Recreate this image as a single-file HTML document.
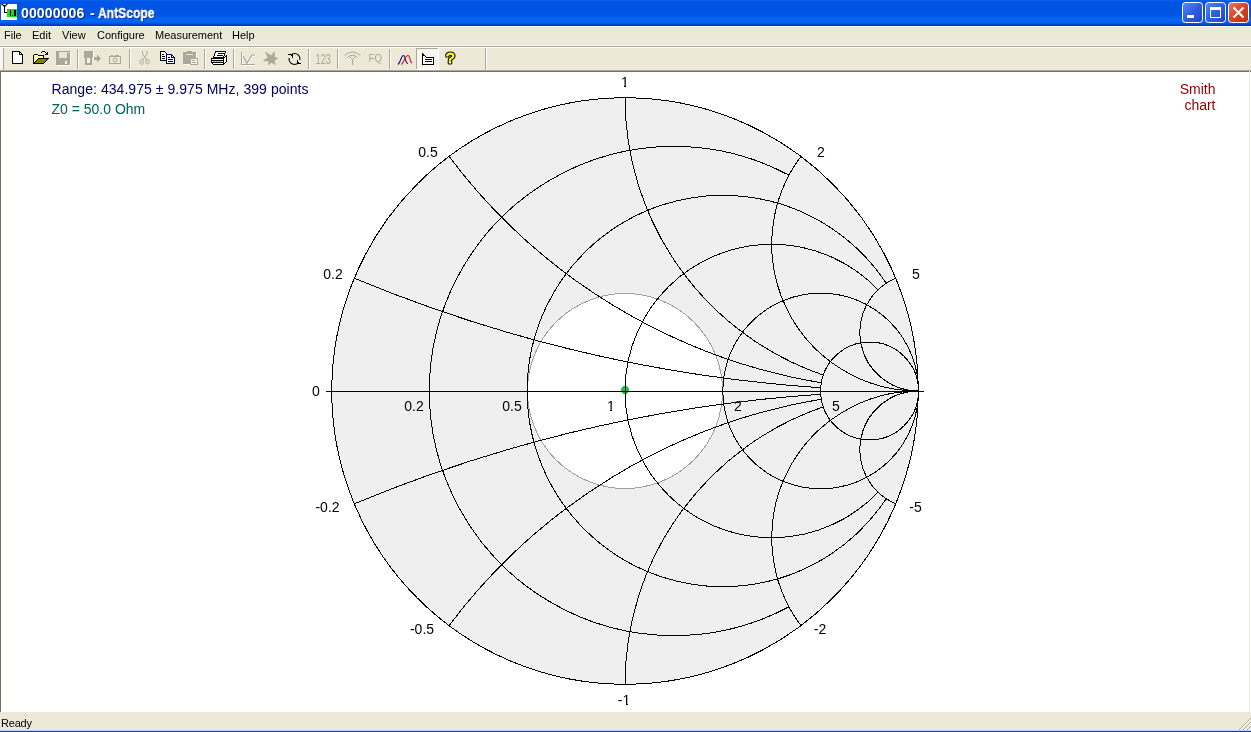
<!DOCTYPE html>
<html><head><meta charset="utf-8"><title>00000006 - AntScope</title>
<style>
html,body{margin:0;padding:0;}
body{width:1251px;height:732px;overflow:hidden;background:#ece9d8;position:relative;font-family:"Liberation Sans",sans-serif;}
#title{position:absolute;left:0;top:0;width:1251px;height:26px;background:linear-gradient(to bottom,#0a62ec 0px,#0055e5 2px,#0054e3 13px,#0058e8 16px,#0066f8 19px,#0064f4 22px,#0050d8 24px,#003cb4 25px,#0038a8 26px);}
#title span{position:absolute;top:5px;font:bold 14px "Liberation Sans",sans-serif;color:#fff;text-shadow:1px 1px 0 #0a2a80;white-space:nowrap;will-change:transform;transform-origin:0 50%}
#menuline{position:absolute;left:0;top:26px;width:1251px;height:1px;background:#fff;}
#menu{will-change:transform;position:absolute;left:0;top:27px;width:1251px;height:18px;font:11px "Liberation Sans",sans-serif;color:#000;}
#menu span{position:absolute;top:2px;white-space:nowrap}
#sep0{position:absolute;left:0;top:45px;width:1251px;height:1px;background:#f7f6f0;}
#sep1{position:absolute;left:0;top:46px;width:1251px;height:1px;background:#aca899;}
#sep2{position:absolute;left:0;top:47px;width:1251px;height:1px;background:#fff;}
#content{position:absolute;left:0;top:70px;width:1251px;height:642px;background:#fff;}
#ctop1{position:absolute;left:0;top:70px;width:1251px;height:1px;background:#aca899;}
#ctop2{position:absolute;left:0;top:71px;width:1251px;height:1px;background:#716f64;}
#cleft{position:absolute;left:0;top:71px;width:1px;height:641px;background:#716f64;}
#status{position:absolute;left:0;top:712px;width:1251px;height:18px;background:#ece9d8;font:11px "Liberation Sans",sans-serif;}
#status span{position:absolute;left:1px;top:5px;will-change:transform;letter-spacing:-0.2px}
#bot{position:absolute;left:0;top:730px;width:1251px;height:1px;background:#b8d4f8;}
#bot2{position:absolute;left:0;top:731px;width:1251px;height:1px;background:#1c3ea0;}
#cright{position:absolute;left:1249px;top:71px;width:1px;height:641px;background:#ece9d8;}
svg{position:absolute;left:0;top:0;will-change:transform}
</style></head><body>
<div id="title"><span id="t1" style="left:20.5px;letter-spacing:0.15px">00000006</span><span id="t2" style="left:89.5px">-</span><span id="t3" style="left:98px;transform:scaleX(0.865);-webkit-text-stroke:0.3px #fff">AntScope</span></div>
<div id="menuline"></div>
<div id="menu"><span style="left:4px">File</span><span style="left:32px">Edit</span><span style="left:62px">View</span><span style="left:97px">Configure</span><span style="left:155px">Measurement</span><span style="left:232px">Help</span></div>
<div id="sep0"></div><div id="sep1"></div><div id="sep2"></div>
<div id="content"></div><div id="ctop1"></div><div id="ctop2"></div><div id="cleft"></div>
<div id="status"><span>Ready</span></div>
<div id="bot"></div><div id="bot2"></div><div id="cright"></div>
<svg id="tb" width="1251" height="732" viewBox="0 0 1251 732">
<g shape-rendering="crispEdges">
<!-- gripper -->
<rect x="0" y="48" width="3" height="22" fill="#f7f6f0"/>
<rect x="3" y="48" width="1" height="22" fill="#aca899"/>
<!-- separators -->
<g fill="#aca899"><rect x="77" y="49" width="1" height="20"/><rect x="129" y="49" width="1" height="20"/><rect x="204" y="49" width="1" height="20"/><rect x="233" y="49" width="1" height="20"/><rect x="308" y="49" width="1" height="20"/><rect x="337" y="49" width="1" height="20"/><rect x="389" y="49" width="1" height="20"/><rect x="485" y="48" width="1" height="22"/></g>
<g fill="#fff"><rect x="78" y="49" width="1" height="20"/><rect x="130" y="49" width="1" height="20"/><rect x="205" y="49" width="1" height="20"/><rect x="234" y="49" width="1" height="20"/><rect x="309" y="49" width="1" height="20"/><rect x="338" y="49" width="1" height="20"/><rect x="390" y="49" width="1" height="20"/><rect x="486" y="48" width="1" height="22"/></g>
<!-- new -->
<path d="M12.5 51.5H19.5L22.5 54.5V63.5H12.5Z" fill="#fff" stroke="#000"/>
<path d="M19.5 51.5V54.5H22.5" fill="none" stroke="#000"/>
<!-- open -->
<path d="M33.5 63.5V55.5L34.5 54.5H37.5L38.5 55.5H43.5V58.5H38.5L33.5 63.5Z" fill="#ffff99" stroke="#000"/>
<path d="M33.5 63.5L38.5 58.5H48.5L43.5 63.5Z" fill="#808000" stroke="#000"/>
<path d="M42 51h3v1h-3zM41 52h1v1h-1zM45 52h1v1h-1zM47 52h1v1h-1zM46 53h2v1h-2zM45 54h3v1h-3z" fill="#000"/>
<!-- save (disabled) -->
<rect x="57" y="52" width="14" height="14" fill="#fff"/>
<rect x="56" y="51" width="14" height="14" fill="#aca899"/>
<rect x="59" y="52" width="8" height="6" fill="#e8e5d6"/>
<rect x="68" y="52" width="1" height="1" fill="#fff"/>
<rect x="65" y="61" width="2" height="3" fill="#f4f2ea"/>
<!-- device arrow (disabled) -->
<rect x="85" y="52" width="9" height="7" fill="#fff"/>
<rect x="84" y="51" width="9" height="7" fill="#aca899"/>
<rect x="85" y="58" width="7" height="7" fill="#aca899"/>
<rect x="87" y="58" width="3" height="5" fill="#f4f2ea"/>
<path d="M94 57H97V54.5L100.5 58.5L97 62V60H94Z" fill="#aca899"/>
<!-- camera (disabled) -->
<g fill="none" stroke="#aca899"><rect x="109.5" y="56.5" width="11" height="7"/><path d="M111 55.5H113M115 55.5H119"/><circle cx="115" cy="60" r="2" shape-rendering="auto"/></g>
<!-- scissors (disabled) -->
<g fill="none" stroke="#aca899" shape-rendering="auto"><path d="M142.5 51V54L147 60M147 51V54L142.5 60"/><ellipse cx="141.7" cy="62" rx="1.6" ry="2.4"/><ellipse cx="147.5" cy="61.7" rx="1.6" ry="2.4"/></g>
<!-- copy -->
<path d="M160.500 51.500H164.500L166.500 53.500V60.500H160.500Z" fill="#fff" stroke="#000"/>
<path d="M162 54H164M162 56H165M162 58H165" stroke="#000" fill="none" transform="translate(0,0.5)"/>
<path d="M166.500 54.500H171.500L174.500 57.500V63.500H166.500Z" fill="#fff" stroke="#000080"/>
<path d="M171.500 54.500V57.500H174.500" fill="none" stroke="#000080"/>
<path d="M168 57.500H170M168 59.500H173M168 61.500H173" stroke="#000" fill="none"/>
<!-- paste (disabled) -->
<rect x="184" y="53" width="13" height="12" fill="#fff"/>
<rect x="183" y="52" width="13" height="12" fill="#aca899"/>
<rect x="187" y="51" width="5" height="2" fill="#aca899"/>
<rect x="186" y="54" width="7" height="1" fill="#e8e5d6"/>
<rect x="190" y="58" width="8" height="7" fill="#aca899"/>
<rect x="191" y="59" width="6" height="5" fill="#f4f2ea"/>
<rect x="192" y="60" width="3" height="1" fill="#aca899"/><rect x="192" y="62" width="4" height="1" fill="#aca899"/>
<!-- print -->
<path d="M215.500 51.500H225.500L223.500 57.500H213.500Z" fill="#fff" stroke="#000"/>
<path d="M218 53.500H224M217 55.500H223" stroke="#000" fill="none"/>
<path d="M211.500 58.500H223.500L226.500 55.500V61.500L223.500 64.500H213.500L211.500 62.500Z" fill="#fff" stroke="#000"/>
<path d="M211.500 58.500H223.500L226.500 55.500M223.500 58.500V64.500M212 60.500H223M212 62.500H223" fill="none" stroke="#000"/>
<rect x="213" y="61" width="9" height="1" fill="#c8c850"/>
<!-- graph (disabled) -->
<path d="M242.500 53V65.500H256M244 57.500L248 64L253 56H256" fill="none" stroke="#fff" shape-rendering="auto"/>
<g fill="none" stroke="#aca899"><path d="M241.500 52V64.500H255"/><path d="M243 56L247 63L252 55H255" shape-rendering="auto" stroke-width="1.200"/></g>
<!-- star (disabled) -->
<path d="M265.400 52L271 55.700L274.400 51.800L274.800 57.600L277.900 58.200L274.200 60.700L275.400 64.500L271.200 62.600L268.300 64.900L268.800 61L263.300 60.700L268 57.600Z" fill="#aca899" stroke="#aca899" stroke-width="0.600" shape-rendering="auto"/>
<!-- refresh -->
<circle cx="294.500" cy="59" r="5.500" fill="none" stroke="#000" shape-rendering="auto" stroke-width="1.100"/>
<rect x="288" y="55" width="4" height="3" fill="#ece9d8"/><rect x="298" y="60" width="4" height="3" fill="#ece9d8"/>
<path d="M288 54h5v4h-1v-2h-1v-1h-3zM297 60h1v2h1v1h2v1h-4z" fill="#000"/>
<!-- antenna (disabled) -->
<g fill="none" stroke="#aca899" shape-rendering="auto"><path d="M344.500 55.500Q352.500 48.500 360.500 55.500"/><path d="M347.500 57.500Q352.500 53 357.500 57.500"/><path d="M352.500 65V59.500M349.500 56.500L352.500 59.500L355.500 56.500"/></g>
<!-- curves -->
<g fill="none" shape-rendering="auto"><path d="M398 64.500C401 62 401 55.500 403.500 55.500C405.500 55.500 405 63.500 408 63.500" stroke="#101088" stroke-width="1.1"/><path d="M401.500 64.500C404.500 62 405 55.500 408 55.500C410.500 55.500 409.500 62.500 412 63" stroke="#d81818" stroke-width="1.1"/></g>
<!-- pressed button -->
<rect x="416" y="48" width="23" height="22" fill="#f6f5ee"/>
<rect x="416" y="48" width="23" height="1" fill="#aca899"/><rect x="416" y="48" width="1" height="22" fill="#aca899"/>
<rect x="416" y="69" width="23" height="1" fill="#fff"/><rect x="438" y="48" width="1" height="22" fill="#fff"/>
<!-- tag icon -->
<path d="M422.500 54V64.500H433.500V57.500H426.500Z" fill="#fff" stroke="#000"/>
<path d="M425 59.500H432M425 61.500H432" stroke="#000" fill="none"/>
</g>
<!-- text icons -->
<text x="315.500" y="64" font-family="Liberation Sans, sans-serif" font-size="14" fill="#aca899" textLength="15.500" lengthAdjust="spacingAndGlyphs">123</text>
<text x="368.500" y="62" font-family="Liberation Sans, sans-serif" font-size="10" fill="#aca899" textLength="13.500" lengthAdjust="spacingAndGlyphs">FQ</text>
<g font-family="Liberation Sans, sans-serif" font-size="15" stroke-linejoin="round"><text x="446" y="63" fill="#000" stroke="#000" stroke-width="3.200" textLength="8.500" lengthAdjust="spacingAndGlyphs">?</text><text x="446" y="63" fill="#ffff00" stroke="#ffff00" stroke-width="1" textLength="8.500" lengthAdjust="spacingAndGlyphs">?</text></g>
</svg>

<svg id="chrome" width="1251" height="732" viewBox="0 0 1251 732">
<defs>
<linearGradient id="bb" x1="0" y1="0" x2="1" y2="1"><stop offset="0" stop-color="#5a8af4"/><stop offset="0.5" stop-color="#2f5fe0"/><stop offset="1" stop-color="#1e46c0"/></linearGradient>
<linearGradient id="br" x1="0" y1="0" x2="1" y2="1"><stop offset="0" stop-color="#ea7a5c"/><stop offset="0.5" stop-color="#d8451f"/><stop offset="1" stop-color="#b83010"/></linearGradient>
</defs>
<!-- app icon -->
<g shape-rendering="crispEdges">
<rect x="1" y="4" width="16" height="16" fill="#fff"/>
<rect x="7" y="9" width="10" height="8" fill="#18e018"/>
<rect x="10" y="10" width="1" height="6" fill="#000"/><rect x="12" y="15" width="1" height="1" fill="#000"/><rect x="14" y="10" width="2" height="6" fill="#000"/>
<rect x="4" y="5" width="1" height="8" fill="#000"/><rect x="4" y="12" width="3" height="1" fill="#000"/>
</g>
<path d="M1.500 3.800L4.500 6.500L7.500 3.800" fill="none" stroke="#000" stroke-width="1.100"/>
<!-- window buttons -->
<rect x="1182.500" y="2.500" width="20" height="20" rx="3" fill="url(#bb)" stroke="#fff"/>
<rect x="1205.500" y="2.500" width="20" height="20" rx="3" fill="url(#bb)" stroke="#fff"/>
<rect x="1228.500" y="2.500" width="20" height="20" rx="3" fill="url(#br)" stroke="#fff"/>
<rect x="1187" y="15" width="7" height="3" fill="#fff"/>
<path d="M1210.500 8.500H1220.500V17.500H1210.500Z" fill="none" stroke="#fff" shape-rendering="crispEdges"/>
<rect x="1210" y="7" width="11" height="3" fill="#fff"/>
<path d="M1233.500 7.500L1243.500 17.500M1243.500 7.500L1233.500 17.500" stroke="#fff" stroke-width="2.200" fill="none"/>
<!-- size grip -->
<g stroke="#aca899" stroke-width="1" fill="none"><path d="M1239 730L1251 718M1243 730L1251 722M1247 730L1251 726"/></g>
<g stroke="#fff" stroke-width="1" fill="none"><path d="M1240 730L1251 719M1244 730L1251 723M1248 730L1251 727"/></g>
</svg>

<svg id="chart" width="1251" height="732" viewBox="0 0 1251 732">
<g shape-rendering="crispEdges" fill="none" stroke="#000" stroke-width="1">
<circle cx="625" cy="391" r="293.25" fill="#efefef"/>
<circle cx="625" cy="391" r="97.5" fill="#fff" stroke="#a0a0a0"/>
<circle cx="625" cy="390" r="4" fill="#22c040" stroke="none"/>
<path d="M789.01 175.19A244.58 244.58 0 1 0 789.01 606.81"/>
<path d="M886.19 283.29A195.67 195.67 0 1 0 886.19 498.71"/>
<path d="M878.02 289.79A146.75 146.75 0 1 0 878.02 492.21"/>
<circle cx="820.67" cy="391" r="97.83"/>
<circle cx="869.58" cy="391" r="48.92"/>
<path d="M354.08 278.12A1467.5 1467.5 0 0 0 820.78 387.74"/>
<path d="M354.08 503.88A1467.5 1467.5 0 0 1 820.78 394.26"/>
<path d="M448.9 156.2A587 587 0 0 0 821.34 382.9"/>
<path d="M448.9 625.8A587 587 0 0 1 821.34 399.1"/>
<path d="M625 97.5A293.5 293.5 0 0 0 823.31 375.14"/>
<path d="M625 684.5A293.5 293.5 0 0 1 823.31 406.86"/>
<path d="M801.1 156.2A146.75 146.75 0 0 0 918.5 391"/>
<path d="M801.1 625.8A146.75 146.75 0 0 1 918.5 391"/>
<path d="M895.92 278.12A58.7 58.7 0 0 0 918.5 391"/>
<path d="M895.92 503.88A58.7 58.7 0 0 1 918.5 391"/>

<path d="M326 391.5H924"/>
</g>
<g font-family="Liberation Sans, sans-serif" font-size="14" fill="#000">
<text x="51.5" y="94" fill="#000060" textLength="257" lengthAdjust="spacing">Range: 434.975 ± 9.975 MHz, 399 points</text>
<text x="51.5" y="114" fill="#006060">Z0 = 50.0 Ohm</text>
<text x="1215.5" y="94" fill="#900000" text-anchor="end">Smith</text>
<text x="1215.5" y="110" fill="#900000" text-anchor="end">chart</text>
<g text-anchor="middle">
<text x="625" y="87">1</text>
<text x="428" y="157">0.5</text>
<text x="821" y="157">2</text>
<text x="333" y="279">0.2</text>
<text x="916" y="279">5</text>
<text x="316" y="396">0</text>
<text x="327.5" y="512">-0.2</text>
<text x="915.5" y="512">-5</text>
<text x="422" y="634">-0.5</text>
<text x="820" y="634">-2</text>
<text x="624" y="705">-1</text>
<text x="414" y="411">0.2</text>
<text x="512" y="411">0.5</text>
<text x="611" y="411">1</text>
<text x="738" y="411">2</text>
<text x="836" y="411">5</text>
</g></g>
<g fill="#fff" shape-rendering="crispEdges"><rect x="621" y="86" width="3" height="1"/><rect x="626" y="86" width="3" height="1"/><rect x="622" y="704" width="4" height="1"/><rect x="628" y="704" width="3" height="1"/><rect x="607" y="410" width="3" height="1"/><rect x="612" y="410" width="3" height="1"/></g>
</svg>
</body></html>
